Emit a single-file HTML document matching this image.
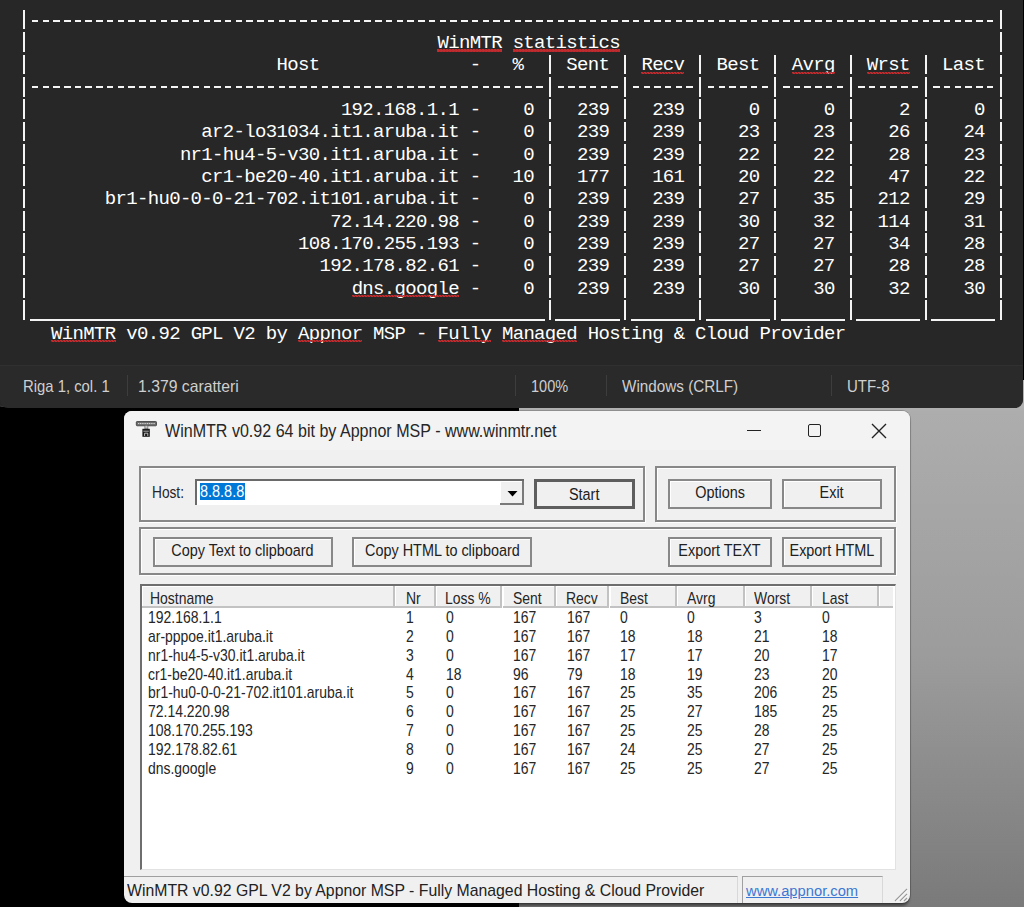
<!DOCTYPE html>
<html><head><meta charset="utf-8">
<style>
html,body{margin:0;padding:0;}
body{width:1024px;height:907px;position:relative;overflow:hidden;background:#000;font-family:"Liberation Sans",sans-serif;}
#bg{position:absolute;left:519px;top:380px;right:0;bottom:0;background:linear-gradient(180deg,#b2b2b2 5%,#adadad 6%,#9c9c9c 52%,#7f7f7f 93%,#7a7a7a 100%);}
#np{position:absolute;left:-5px;top:-10px;width:1028px;height:416px;background:#272727;border-bottom:1px solid #353535;border-radius:0 0 8px 8px;}
#sb{position:absolute;left:0;top:365px;width:1023px;height:41.5px;background:#2a2a2a;border-top:1px solid #303030;border-radius:0 0 8px 8px;}
pre{position:absolute;left:18.9px;top:9.7px;margin:0;font-family:"Liberation Mono",monospace;font-size:19px;letter-spacing:-0.669px;line-height:22.35px;color:#fff;}
.sq{position:relative;}
.sq::after{content:"";position:absolute;left:0;right:0;top:17.2px;height:2.4px;background:linear-gradient(45deg,transparent 30%,#c42b2e 30%,#c42b2e 70%,transparent 70%) 0 0/3px 2.4px,linear-gradient(-45deg,transparent 30%,#c42b2e 30%,#c42b2e 70%,transparent 70%) 1.5px 0/3px 2.4px;}
.grid i{position:absolute;background:#f4f4f4;display:block;}
.st{position:absolute;top:377px;font-size:16.5px;color:#cfcfcf;white-space:nowrap;transform:scaleX(0.9);transform-origin:0 0;}
.sep{position:absolute;top:375px;width:1px;height:21px;background:#3d3d3d;}
/* dialog */
#dlg{position:absolute;left:124px;top:411px;width:786px;height:492px;background:#f0f0f0;border-radius:8px;overflow:hidden;box-shadow:0 0 0 1px rgba(0,0,0,0.18),0 4px 3px -1px rgba(0,0,0,0.45);}
#title{position:absolute;left:0;top:0;width:786px;height:39px;background:#f3f3f3;}
.a{position:absolute;}
.ttl{position:absolute;left:164.5px;top:419.5px;font-size:18.5px;color:#262626;white-space:nowrap;transform:scaleX(0.868);transform-origin:0 0;}
.gb{position:absolute;border:2px solid #888;box-shadow:inset 1px 1px 0 #fff,1px 1px 0 #fff;box-sizing:border-box;}
.btn{position:absolute;border:2px solid #888;box-shadow:inset 1px 1px 0 #fff;background:#f0f0f0;font-size:16.3px;color:#202020;text-align:center;box-sizing:border-box;white-space:nowrap;}
.btn span{display:inline-block;transform:scaleX(0.885);}
.lt{position:absolute;font-size:17px;color:#262626;white-space:nowrap;transform:scaleX(0.82);transform-origin:0 0;}
.hc{position:absolute;top:585.5px;height:22px;background:#f0f0f0;border-right:2px solid #c2c2c2;border-bottom:2px solid #c2c2c2;box-shadow:inset 1px 1px 0 #fff;box-sizing:border-box;}
</style></head><body>
<div id="bg"></div>
<div id="np"></div>
<div id="sb"></div>
<pre> 
                                       <span class="sq">WinMTR</span> <span class="sq">statistics</span>
                        Host              -   %    Sent   <span class="sq">Recv</span>   Best   <span class="sq">Avrg</span>   <span class="sq">Wrst</span>   Last
 
                              192.168.1.1 -    0    239    239      0      0      2      0
                 ar2-lo31034.it1.aruba.it -    0    239    239     23     23     26     24
               nr1-hu4-5-v30.it1.aruba.it -    0    239    239     22     22     28     23
                 cr1-be20-40.it1.aruba.it -   10    177    161     20     22     47     22
        br1-hu0-0-0-21-702.it101.aruba.it -    0    239    239     27     35    212     29
                             72.14.220.98 -    0    239    239     30     32    114     31
                          108.170.255.193 -    0    239    239     27     27     34     28
                            192.178.82.61 -    0    239    239     27     27     28     28
                               <span class="sq">dns.google</span> -    0    239    239     30     30     32     30
 
   <span class="sq">WinMTR</span> v0.92 GPL V2 by <span class="sq">Appnor</span> MSP - <span class="sq">Fully</span> <span class="sq">Managed</span> Hosting &amp; Cloud Provider</pre>
<div class="grid">
<i style="left:23.27px;top:9.80px;width:2px;height:19.7px"></i>
<i style="left:999.79px;top:9.80px;width:2px;height:19.7px"></i>
<i style="left:23.27px;top:32.15px;width:2px;height:19.7px"></i>
<i style="left:999.79px;top:32.15px;width:2px;height:19.7px"></i>
<i style="left:23.27px;top:54.50px;width:2px;height:19.7px"></i>
<i style="left:549.08px;top:54.50px;width:2px;height:19.7px"></i>
<i style="left:624.20px;top:54.50px;width:2px;height:19.7px"></i>
<i style="left:699.32px;top:54.50px;width:2px;height:19.7px"></i>
<i style="left:774.44px;top:54.50px;width:2px;height:19.7px"></i>
<i style="left:849.55px;top:54.50px;width:2px;height:19.7px"></i>
<i style="left:924.67px;top:54.50px;width:2px;height:19.7px"></i>
<i style="left:999.79px;top:54.50px;width:2px;height:19.7px"></i>
<i style="left:23.27px;top:76.85px;width:2px;height:19.7px"></i>
<i style="left:549.08px;top:76.85px;width:2px;height:19.7px"></i>
<i style="left:624.20px;top:76.85px;width:2px;height:19.7px"></i>
<i style="left:699.32px;top:76.85px;width:2px;height:19.7px"></i>
<i style="left:774.44px;top:76.85px;width:2px;height:19.7px"></i>
<i style="left:849.55px;top:76.85px;width:2px;height:19.7px"></i>
<i style="left:924.67px;top:76.85px;width:2px;height:19.7px"></i>
<i style="left:999.79px;top:76.85px;width:2px;height:19.7px"></i>
<i style="left:23.27px;top:300.35px;width:2px;height:19.7px"></i>
<i style="left:549.08px;top:300.35px;width:2px;height:19.7px"></i>
<i style="left:624.20px;top:300.35px;width:2px;height:19.7px"></i>
<i style="left:699.32px;top:300.35px;width:2px;height:19.7px"></i>
<i style="left:774.44px;top:300.35px;width:2px;height:19.7px"></i>
<i style="left:849.55px;top:300.35px;width:2px;height:19.7px"></i>
<i style="left:924.67px;top:300.35px;width:2px;height:19.7px"></i>
<i style="left:999.79px;top:300.35px;width:2px;height:19.7px"></i>
<i style="left:23.27px;top:99.20px;width:2px;height:19.7px"></i>
<i style="left:549.08px;top:99.20px;width:2px;height:19.7px"></i>
<i style="left:624.20px;top:99.20px;width:2px;height:19.7px"></i>
<i style="left:699.32px;top:99.20px;width:2px;height:19.7px"></i>
<i style="left:774.44px;top:99.20px;width:2px;height:19.7px"></i>
<i style="left:849.55px;top:99.20px;width:2px;height:19.7px"></i>
<i style="left:924.67px;top:99.20px;width:2px;height:19.7px"></i>
<i style="left:999.79px;top:99.20px;width:2px;height:19.7px"></i>
<i style="left:23.27px;top:121.55px;width:2px;height:19.7px"></i>
<i style="left:549.08px;top:121.55px;width:2px;height:19.7px"></i>
<i style="left:624.20px;top:121.55px;width:2px;height:19.7px"></i>
<i style="left:699.32px;top:121.55px;width:2px;height:19.7px"></i>
<i style="left:774.44px;top:121.55px;width:2px;height:19.7px"></i>
<i style="left:849.55px;top:121.55px;width:2px;height:19.7px"></i>
<i style="left:924.67px;top:121.55px;width:2px;height:19.7px"></i>
<i style="left:999.79px;top:121.55px;width:2px;height:19.7px"></i>
<i style="left:23.27px;top:143.90px;width:2px;height:19.7px"></i>
<i style="left:549.08px;top:143.90px;width:2px;height:19.7px"></i>
<i style="left:624.20px;top:143.90px;width:2px;height:19.7px"></i>
<i style="left:699.32px;top:143.90px;width:2px;height:19.7px"></i>
<i style="left:774.44px;top:143.90px;width:2px;height:19.7px"></i>
<i style="left:849.55px;top:143.90px;width:2px;height:19.7px"></i>
<i style="left:924.67px;top:143.90px;width:2px;height:19.7px"></i>
<i style="left:999.79px;top:143.90px;width:2px;height:19.7px"></i>
<i style="left:23.27px;top:166.25px;width:2px;height:19.7px"></i>
<i style="left:549.08px;top:166.25px;width:2px;height:19.7px"></i>
<i style="left:624.20px;top:166.25px;width:2px;height:19.7px"></i>
<i style="left:699.32px;top:166.25px;width:2px;height:19.7px"></i>
<i style="left:774.44px;top:166.25px;width:2px;height:19.7px"></i>
<i style="left:849.55px;top:166.25px;width:2px;height:19.7px"></i>
<i style="left:924.67px;top:166.25px;width:2px;height:19.7px"></i>
<i style="left:999.79px;top:166.25px;width:2px;height:19.7px"></i>
<i style="left:23.27px;top:188.60px;width:2px;height:19.7px"></i>
<i style="left:549.08px;top:188.60px;width:2px;height:19.7px"></i>
<i style="left:624.20px;top:188.60px;width:2px;height:19.7px"></i>
<i style="left:699.32px;top:188.60px;width:2px;height:19.7px"></i>
<i style="left:774.44px;top:188.60px;width:2px;height:19.7px"></i>
<i style="left:849.55px;top:188.60px;width:2px;height:19.7px"></i>
<i style="left:924.67px;top:188.60px;width:2px;height:19.7px"></i>
<i style="left:999.79px;top:188.60px;width:2px;height:19.7px"></i>
<i style="left:23.27px;top:210.95px;width:2px;height:19.7px"></i>
<i style="left:549.08px;top:210.95px;width:2px;height:19.7px"></i>
<i style="left:624.20px;top:210.95px;width:2px;height:19.7px"></i>
<i style="left:699.32px;top:210.95px;width:2px;height:19.7px"></i>
<i style="left:774.44px;top:210.95px;width:2px;height:19.7px"></i>
<i style="left:849.55px;top:210.95px;width:2px;height:19.7px"></i>
<i style="left:924.67px;top:210.95px;width:2px;height:19.7px"></i>
<i style="left:999.79px;top:210.95px;width:2px;height:19.7px"></i>
<i style="left:23.27px;top:233.30px;width:2px;height:19.7px"></i>
<i style="left:549.08px;top:233.30px;width:2px;height:19.7px"></i>
<i style="left:624.20px;top:233.30px;width:2px;height:19.7px"></i>
<i style="left:699.32px;top:233.30px;width:2px;height:19.7px"></i>
<i style="left:774.44px;top:233.30px;width:2px;height:19.7px"></i>
<i style="left:849.55px;top:233.30px;width:2px;height:19.7px"></i>
<i style="left:924.67px;top:233.30px;width:2px;height:19.7px"></i>
<i style="left:999.79px;top:233.30px;width:2px;height:19.7px"></i>
<i style="left:23.27px;top:255.65px;width:2px;height:19.7px"></i>
<i style="left:549.08px;top:255.65px;width:2px;height:19.7px"></i>
<i style="left:624.20px;top:255.65px;width:2px;height:19.7px"></i>
<i style="left:699.32px;top:255.65px;width:2px;height:19.7px"></i>
<i style="left:774.44px;top:255.65px;width:2px;height:19.7px"></i>
<i style="left:849.55px;top:255.65px;width:2px;height:19.7px"></i>
<i style="left:924.67px;top:255.65px;width:2px;height:19.7px"></i>
<i style="left:999.79px;top:255.65px;width:2px;height:19.7px"></i>
<i style="left:23.27px;top:278.00px;width:2px;height:19.7px"></i>
<i style="left:549.08px;top:278.00px;width:2px;height:19.7px"></i>
<i style="left:624.20px;top:278.00px;width:2px;height:19.7px"></i>
<i style="left:699.32px;top:278.00px;width:2px;height:19.7px"></i>
<i style="left:774.44px;top:278.00px;width:2px;height:19.7px"></i>
<i style="left:849.55px;top:278.00px;width:2px;height:19.7px"></i>
<i style="left:924.67px;top:278.00px;width:2px;height:19.7px"></i>
<i style="left:999.79px;top:278.00px;width:2px;height:19.7px"></i>
<i style="left:31.83px;top:19.50px;width:6.5px;height:2px"></i>
<i style="left:42.56px;top:19.50px;width:6.5px;height:2px"></i>
<i style="left:53.29px;top:19.50px;width:6.5px;height:2px"></i>
<i style="left:64.02px;top:19.50px;width:6.5px;height:2px"></i>
<i style="left:74.76px;top:19.50px;width:6.5px;height:2px"></i>
<i style="left:85.49px;top:19.50px;width:6.5px;height:2px"></i>
<i style="left:96.22px;top:19.50px;width:6.5px;height:2px"></i>
<i style="left:106.95px;top:19.50px;width:6.5px;height:2px"></i>
<i style="left:117.68px;top:19.50px;width:6.5px;height:2px"></i>
<i style="left:128.41px;top:19.50px;width:6.5px;height:2px"></i>
<i style="left:139.14px;top:19.50px;width:6.5px;height:2px"></i>
<i style="left:149.87px;top:19.50px;width:6.5px;height:2px"></i>
<i style="left:160.60px;top:19.50px;width:6.5px;height:2px"></i>
<i style="left:171.33px;top:19.50px;width:6.5px;height:2px"></i>
<i style="left:182.06px;top:19.50px;width:6.5px;height:2px"></i>
<i style="left:192.80px;top:19.50px;width:6.5px;height:2px"></i>
<i style="left:203.53px;top:19.50px;width:6.5px;height:2px"></i>
<i style="left:214.26px;top:19.50px;width:6.5px;height:2px"></i>
<i style="left:224.99px;top:19.50px;width:6.5px;height:2px"></i>
<i style="left:235.72px;top:19.50px;width:6.5px;height:2px"></i>
<i style="left:246.45px;top:19.50px;width:6.5px;height:2px"></i>
<i style="left:257.18px;top:19.50px;width:6.5px;height:2px"></i>
<i style="left:267.91px;top:19.50px;width:6.5px;height:2px"></i>
<i style="left:278.64px;top:19.50px;width:6.5px;height:2px"></i>
<i style="left:289.37px;top:19.50px;width:6.5px;height:2px"></i>
<i style="left:300.11px;top:19.50px;width:6.5px;height:2px"></i>
<i style="left:310.84px;top:19.50px;width:6.5px;height:2px"></i>
<i style="left:321.57px;top:19.50px;width:6.5px;height:2px"></i>
<i style="left:332.30px;top:19.50px;width:6.5px;height:2px"></i>
<i style="left:343.03px;top:19.50px;width:6.5px;height:2px"></i>
<i style="left:353.76px;top:19.50px;width:6.5px;height:2px"></i>
<i style="left:364.49px;top:19.50px;width:6.5px;height:2px"></i>
<i style="left:375.22px;top:19.50px;width:6.5px;height:2px"></i>
<i style="left:385.95px;top:19.50px;width:6.5px;height:2px"></i>
<i style="left:396.68px;top:19.50px;width:6.5px;height:2px"></i>
<i style="left:407.42px;top:19.50px;width:6.5px;height:2px"></i>
<i style="left:418.15px;top:19.50px;width:6.5px;height:2px"></i>
<i style="left:428.88px;top:19.50px;width:6.5px;height:2px"></i>
<i style="left:439.61px;top:19.50px;width:6.5px;height:2px"></i>
<i style="left:450.34px;top:19.50px;width:6.5px;height:2px"></i>
<i style="left:461.07px;top:19.50px;width:6.5px;height:2px"></i>
<i style="left:471.80px;top:19.50px;width:6.5px;height:2px"></i>
<i style="left:482.53px;top:19.50px;width:6.5px;height:2px"></i>
<i style="left:493.26px;top:19.50px;width:6.5px;height:2px"></i>
<i style="left:503.99px;top:19.50px;width:6.5px;height:2px"></i>
<i style="left:514.73px;top:19.50px;width:6.5px;height:2px"></i>
<i style="left:525.46px;top:19.50px;width:6.5px;height:2px"></i>
<i style="left:536.19px;top:19.50px;width:6.5px;height:2px"></i>
<i style="left:546.92px;top:19.50px;width:6.5px;height:2px"></i>
<i style="left:557.65px;top:19.50px;width:6.5px;height:2px"></i>
<i style="left:568.38px;top:19.50px;width:6.5px;height:2px"></i>
<i style="left:579.11px;top:19.50px;width:6.5px;height:2px"></i>
<i style="left:589.84px;top:19.50px;width:6.5px;height:2px"></i>
<i style="left:600.57px;top:19.50px;width:6.5px;height:2px"></i>
<i style="left:611.31px;top:19.50px;width:6.5px;height:2px"></i>
<i style="left:622.04px;top:19.50px;width:6.5px;height:2px"></i>
<i style="left:632.77px;top:19.50px;width:6.5px;height:2px"></i>
<i style="left:643.50px;top:19.50px;width:6.5px;height:2px"></i>
<i style="left:654.23px;top:19.50px;width:6.5px;height:2px"></i>
<i style="left:664.96px;top:19.50px;width:6.5px;height:2px"></i>
<i style="left:675.69px;top:19.50px;width:6.5px;height:2px"></i>
<i style="left:686.42px;top:19.50px;width:6.5px;height:2px"></i>
<i style="left:697.15px;top:19.50px;width:6.5px;height:2px"></i>
<i style="left:707.88px;top:19.50px;width:6.5px;height:2px"></i>
<i style="left:718.62px;top:19.50px;width:6.5px;height:2px"></i>
<i style="left:729.35px;top:19.50px;width:6.5px;height:2px"></i>
<i style="left:740.08px;top:19.50px;width:6.5px;height:2px"></i>
<i style="left:750.81px;top:19.50px;width:6.5px;height:2px"></i>
<i style="left:761.54px;top:19.50px;width:6.5px;height:2px"></i>
<i style="left:772.27px;top:19.50px;width:6.5px;height:2px"></i>
<i style="left:783.00px;top:19.50px;width:6.5px;height:2px"></i>
<i style="left:793.73px;top:19.50px;width:6.5px;height:2px"></i>
<i style="left:804.46px;top:19.50px;width:6.5px;height:2px"></i>
<i style="left:815.19px;top:19.50px;width:6.5px;height:2px"></i>
<i style="left:825.93px;top:19.50px;width:6.5px;height:2px"></i>
<i style="left:836.66px;top:19.50px;width:6.5px;height:2px"></i>
<i style="left:847.39px;top:19.50px;width:6.5px;height:2px"></i>
<i style="left:858.12px;top:19.50px;width:6.5px;height:2px"></i>
<i style="left:868.85px;top:19.50px;width:6.5px;height:2px"></i>
<i style="left:879.58px;top:19.50px;width:6.5px;height:2px"></i>
<i style="left:890.31px;top:19.50px;width:6.5px;height:2px"></i>
<i style="left:901.04px;top:19.50px;width:6.5px;height:2px"></i>
<i style="left:911.77px;top:19.50px;width:6.5px;height:2px"></i>
<i style="left:922.50px;top:19.50px;width:6.5px;height:2px"></i>
<i style="left:933.24px;top:19.50px;width:6.5px;height:2px"></i>
<i style="left:943.97px;top:19.50px;width:6.5px;height:2px"></i>
<i style="left:954.70px;top:19.50px;width:6.5px;height:2px"></i>
<i style="left:965.43px;top:19.50px;width:6.5px;height:2px"></i>
<i style="left:976.16px;top:19.50px;width:6.5px;height:2px"></i>
<i style="left:986.89px;top:19.50px;width:6.5px;height:2px"></i>
<i style="left:31.83px;top:86.49px;width:6.5px;height:2px"></i>
<i style="left:42.56px;top:86.49px;width:6.5px;height:2px"></i>
<i style="left:53.29px;top:86.49px;width:6.5px;height:2px"></i>
<i style="left:64.02px;top:86.49px;width:6.5px;height:2px"></i>
<i style="left:74.76px;top:86.49px;width:6.5px;height:2px"></i>
<i style="left:85.49px;top:86.49px;width:6.5px;height:2px"></i>
<i style="left:96.22px;top:86.49px;width:6.5px;height:2px"></i>
<i style="left:106.95px;top:86.49px;width:6.5px;height:2px"></i>
<i style="left:117.68px;top:86.49px;width:6.5px;height:2px"></i>
<i style="left:128.41px;top:86.49px;width:6.5px;height:2px"></i>
<i style="left:139.14px;top:86.49px;width:6.5px;height:2px"></i>
<i style="left:149.87px;top:86.49px;width:6.5px;height:2px"></i>
<i style="left:160.60px;top:86.49px;width:6.5px;height:2px"></i>
<i style="left:171.33px;top:86.49px;width:6.5px;height:2px"></i>
<i style="left:182.06px;top:86.49px;width:6.5px;height:2px"></i>
<i style="left:192.80px;top:86.49px;width:6.5px;height:2px"></i>
<i style="left:203.53px;top:86.49px;width:6.5px;height:2px"></i>
<i style="left:214.26px;top:86.49px;width:6.5px;height:2px"></i>
<i style="left:224.99px;top:86.49px;width:6.5px;height:2px"></i>
<i style="left:235.72px;top:86.49px;width:6.5px;height:2px"></i>
<i style="left:246.45px;top:86.49px;width:6.5px;height:2px"></i>
<i style="left:257.18px;top:86.49px;width:6.5px;height:2px"></i>
<i style="left:267.91px;top:86.49px;width:6.5px;height:2px"></i>
<i style="left:278.64px;top:86.49px;width:6.5px;height:2px"></i>
<i style="left:289.37px;top:86.49px;width:6.5px;height:2px"></i>
<i style="left:300.11px;top:86.49px;width:6.5px;height:2px"></i>
<i style="left:310.84px;top:86.49px;width:6.5px;height:2px"></i>
<i style="left:321.57px;top:86.49px;width:6.5px;height:2px"></i>
<i style="left:332.30px;top:86.49px;width:6.5px;height:2px"></i>
<i style="left:343.03px;top:86.49px;width:6.5px;height:2px"></i>
<i style="left:353.76px;top:86.49px;width:6.5px;height:2px"></i>
<i style="left:364.49px;top:86.49px;width:6.5px;height:2px"></i>
<i style="left:375.22px;top:86.49px;width:6.5px;height:2px"></i>
<i style="left:385.95px;top:86.49px;width:6.5px;height:2px"></i>
<i style="left:396.68px;top:86.49px;width:6.5px;height:2px"></i>
<i style="left:407.42px;top:86.49px;width:6.5px;height:2px"></i>
<i style="left:418.15px;top:86.49px;width:6.5px;height:2px"></i>
<i style="left:428.88px;top:86.49px;width:6.5px;height:2px"></i>
<i style="left:439.61px;top:86.49px;width:6.5px;height:2px"></i>
<i style="left:450.34px;top:86.49px;width:6.5px;height:2px"></i>
<i style="left:461.07px;top:86.49px;width:6.5px;height:2px"></i>
<i style="left:471.80px;top:86.49px;width:6.5px;height:2px"></i>
<i style="left:482.53px;top:86.49px;width:6.5px;height:2px"></i>
<i style="left:493.26px;top:86.49px;width:6.5px;height:2px"></i>
<i style="left:503.99px;top:86.49px;width:6.5px;height:2px"></i>
<i style="left:514.73px;top:86.49px;width:6.5px;height:2px"></i>
<i style="left:525.46px;top:86.49px;width:6.5px;height:2px"></i>
<i style="left:536.19px;top:86.49px;width:6.5px;height:2px"></i>
<i style="left:557.65px;top:86.49px;width:6.5px;height:2px"></i>
<i style="left:568.38px;top:86.49px;width:6.5px;height:2px"></i>
<i style="left:579.11px;top:86.49px;width:6.5px;height:2px"></i>
<i style="left:589.84px;top:86.49px;width:6.5px;height:2px"></i>
<i style="left:600.57px;top:86.49px;width:6.5px;height:2px"></i>
<i style="left:611.31px;top:86.49px;width:6.5px;height:2px"></i>
<i style="left:632.77px;top:86.49px;width:6.5px;height:2px"></i>
<i style="left:643.50px;top:86.49px;width:6.5px;height:2px"></i>
<i style="left:654.23px;top:86.49px;width:6.5px;height:2px"></i>
<i style="left:664.96px;top:86.49px;width:6.5px;height:2px"></i>
<i style="left:675.69px;top:86.49px;width:6.5px;height:2px"></i>
<i style="left:686.42px;top:86.49px;width:6.5px;height:2px"></i>
<i style="left:707.88px;top:86.49px;width:6.5px;height:2px"></i>
<i style="left:718.62px;top:86.49px;width:6.5px;height:2px"></i>
<i style="left:729.35px;top:86.49px;width:6.5px;height:2px"></i>
<i style="left:740.08px;top:86.49px;width:6.5px;height:2px"></i>
<i style="left:750.81px;top:86.49px;width:6.5px;height:2px"></i>
<i style="left:761.54px;top:86.49px;width:6.5px;height:2px"></i>
<i style="left:783.00px;top:86.49px;width:6.5px;height:2px"></i>
<i style="left:793.73px;top:86.49px;width:6.5px;height:2px"></i>
<i style="left:804.46px;top:86.49px;width:6.5px;height:2px"></i>
<i style="left:815.19px;top:86.49px;width:6.5px;height:2px"></i>
<i style="left:825.93px;top:86.49px;width:6.5px;height:2px"></i>
<i style="left:836.66px;top:86.49px;width:6.5px;height:2px"></i>
<i style="left:858.12px;top:86.49px;width:6.5px;height:2px"></i>
<i style="left:868.85px;top:86.49px;width:6.5px;height:2px"></i>
<i style="left:879.58px;top:86.49px;width:6.5px;height:2px"></i>
<i style="left:890.31px;top:86.49px;width:6.5px;height:2px"></i>
<i style="left:901.04px;top:86.49px;width:6.5px;height:2px"></i>
<i style="left:911.77px;top:86.49px;width:6.5px;height:2px"></i>
<i style="left:933.24px;top:86.49px;width:6.5px;height:2px"></i>
<i style="left:943.97px;top:86.49px;width:6.5px;height:2px"></i>
<i style="left:954.70px;top:86.49px;width:6.5px;height:2px"></i>
<i style="left:965.43px;top:86.49px;width:6.5px;height:2px"></i>
<i style="left:976.16px;top:86.49px;width:6.5px;height:2px"></i>
<i style="left:986.89px;top:86.49px;width:6.5px;height:2px"></i>
<i style="left:29.63px;top:318.8px;width:515.09px;height:2.2px"></i>
<i style="left:555.45px;top:318.8px;width:64.39px;height:2.2px"></i>
<i style="left:630.57px;top:318.8px;width:64.39px;height:2.2px"></i>
<i style="left:705.68px;top:318.8px;width:64.39px;height:2.2px"></i>
<i style="left:780.80px;top:318.8px;width:64.39px;height:2.2px"></i>
<i style="left:855.92px;top:318.8px;width:64.39px;height:2.2px"></i>
<i style="left:931.03px;top:318.8px;width:64.39px;height:2.2px"></i>
</div>
<div class="st" style="left:23px">Riga 1, col. 1</div>
<div class="sep" style="left:127px"></div>
<div class="st" style="left:138px;transform:scaleX(0.955)">1.379 caratteri</div>
<div class="sep" style="left:515px"></div>
<div class="st" style="left:531px;transform:scaleX(0.88)">100%</div>
<div class="sep" style="left:606px"></div>
<div class="st" style="left:622px;transform:scaleX(0.925)">Windows (CRLF)</div>
<div class="sep" style="left:831px"></div>
<div class="st" style="left:847px;transform:scaleX(0.91)">UTF-8</div>

<div id="dlg"><div id="title"></div></div>
<svg class="a" style="left:135px;top:420px" width="23" height="18" viewBox="0 0 23 18">
 <rect x="1.3" y="1.5" width="20.2" height="4.3" rx="0.8" fill="#6a6a6a" stroke="#3a3a3a" stroke-width="0.8"/>
 <path d="M3 3.6H20" stroke="#e8e8e8" stroke-width="0.9" stroke-dasharray="1.2 0.6"/>
 <rect x="9.9" y="5.3" width="3" height="3.6" fill="#c4c4c4" stroke="#555" stroke-width="0.6"/>
 <rect x="7.4" y="8.8" width="7.4" height="8" fill="#1a1a1a"/>
 <path d="M8.4 11.2H13.8" stroke="#d0d0d0" stroke-width="0.8"/>
 <path d="M9.6 16V13.2H12.8V16" fill="none" stroke="#e0e0e0" stroke-width="0.8"/>
</svg>
<div class="ttl">WinMTR v0.92 64 bit by Appnor MSP - www.winmtr.net</div>
<div class="a" style="left:747px;top:430px;width:13.5px;height:1.3px;background:#222"></div>
<div class="a" style="left:808px;top:424px;width:11px;height:11px;border:1.4px solid #222;border-radius:2px"></div>
<svg class="a" style="left:871px;top:423px" width="16" height="16" viewBox="0 0 16 16"><path d="M1 1L15 15M15 1L1 15" stroke="#222" stroke-width="1.4"/></svg>

<div class="gb" style="left:139px;top:466px;width:506px;height:56px"></div>
<div class="gb" style="left:655px;top:466px;width:241px;height:56px"></div>
<div class="gb" style="left:139px;top:527px;width:757px;height:48px"></div>

<div class="lt" style="left:151.5px;top:482.5px;font-size:16.5px;transform:scaleX(0.83)">Host:</div>
<div class="a" style="left:195px;top:479px;width:329px;height:26px;background:#fff;border-top:2px solid #6a6a6a;border-left:2px solid #6a6a6a;box-sizing:border-box"></div>
<div class="a" style="left:199.5px;top:482.5px;width:45.5px;height:17.5px;background:#0078d7"></div>
<div class="lt" style="left:199.5px;top:481.5px;font-size:17px;color:#fff;transform:scaleX(0.85)">8.8.8.8</div>
<div class="a" style="left:500px;top:481px;width:24px;height:24px;background:#f0f0f0;border-right:2px solid #7a7a7a;border-bottom:2px solid #7a7a7a;box-shadow:inset 1px 1px 0 #fff;box-sizing:border-box"></div>
<svg class="a" style="left:506.5px;top:490.5px" width="11" height="6" viewBox="0 0 11 6"><path d="M0.5 0H10.5L5.5 5.5z" fill="#000"/></svg>
<div class="btn" style="left:534px;top:479px;width:100.5px;height:30px;border:3px solid #5e5e5e;box-shadow:none;line-height:24px"><span>Start</span></div>
<div class="btn" style="left:668px;top:479px;width:103.5px;height:30px;line-height:22.6px"><span>Options</span></div>
<div class="btn" style="left:782px;top:479px;width:99.5px;height:30px;line-height:22.6px"><span>Exit</span></div>
<div class="btn" style="left:152.5px;top:536.5px;width:180px;height:30.5px;line-height:23px"><span>Copy Text to clipboard</span></div>
<div class="btn" style="left:352px;top:536.5px;width:180px;height:30.5px;line-height:23px"><span>Copy HTML to clipboard</span></div>
<div class="btn" style="left:668px;top:536.5px;width:103.5px;height:30.5px;line-height:23px"><span>Export TEXT</span></div>
<div class="btn" style="left:782px;top:536.5px;width:99.5px;height:30.5px;line-height:23px"><span>Export HTML</span></div>

<div class="a" style="left:139.5px;top:583.5px;width:756px;height:286px;background:#fff;border-top:2px solid #6e6e6e;border-left:2px solid #6e6e6e;border-right:1px solid #e2e2e2;border-bottom:1px solid #e2e2e2;box-sizing:border-box"></div>
<div class="hc" style="left:141.5px;width:253.1px"></div>
<div class="hc" style="left:394.6px;width:41.1px"></div>
<div class="hc" style="left:435.7px;width:66.8px"></div>
<div class="hc" style="left:502.5px;width:53.4px"></div>
<div class="hc" style="left:555.9px;width:53.6px"></div>
<div class="hc" style="left:609.5px;width:67.3px"></div>
<div class="hc" style="left:676.8px;width:67.8px"></div>
<div class="hc" style="left:744.6px;width:67.2px"></div>
<div class="hc" style="left:811.8px;width:67.1px"></div>
<div class="hc" style="left:878.9px;width:14.6px;border-right:0"></div>
<div class="lt" style="left:150px;top:588.5px">Hostname</div>
<div class="lt" style="left:406.4px;top:588.5px">Nr</div>
<div class="lt" style="left:445.4px;top:588.5px">Loss %</div>
<div class="lt" style="left:512.8px;top:588.5px">Sent</div>
<div class="lt" style="left:566.4px;top:588.5px">Recv</div>
<div class="lt" style="left:620.3px;top:588.5px">Best</div>
<div class="lt" style="left:686.7px;top:588.5px">Avrg</div>
<div class="lt" style="left:754px;top:588.5px">Worst</div>
<div class="lt" style="left:821.8px;top:588.5px">Last</div>
<div class="lt" style="left:148px;top:608.00px">192.168.1.1</div>
<div class="lt" style="left:406px;top:608.00px">1</div>
<div class="lt" style="left:445.5px;top:608.00px">0</div>
<div class="lt" style="left:513px;top:608.00px">167</div>
<div class="lt" style="left:566.5px;top:608.00px">167</div>
<div class="lt" style="left:620px;top:608.00px">0</div>
<div class="lt" style="left:687px;top:608.00px">0</div>
<div class="lt" style="left:754px;top:608.00px">3</div>
<div class="lt" style="left:822px;top:608.00px">0</div>
<div class="lt" style="left:148px;top:626.85px">ar-pppoe.it1.aruba.it</div>
<div class="lt" style="left:406px;top:626.85px">2</div>
<div class="lt" style="left:445.5px;top:626.85px">0</div>
<div class="lt" style="left:513px;top:626.85px">167</div>
<div class="lt" style="left:566.5px;top:626.85px">167</div>
<div class="lt" style="left:620px;top:626.85px">18</div>
<div class="lt" style="left:687px;top:626.85px">18</div>
<div class="lt" style="left:754px;top:626.85px">21</div>
<div class="lt" style="left:822px;top:626.85px">18</div>
<div class="lt" style="left:148px;top:645.70px">nr1-hu4-5-v30.it1.aruba.it</div>
<div class="lt" style="left:406px;top:645.70px">3</div>
<div class="lt" style="left:445.5px;top:645.70px">0</div>
<div class="lt" style="left:513px;top:645.70px">167</div>
<div class="lt" style="left:566.5px;top:645.70px">167</div>
<div class="lt" style="left:620px;top:645.70px">17</div>
<div class="lt" style="left:687px;top:645.70px">17</div>
<div class="lt" style="left:754px;top:645.70px">20</div>
<div class="lt" style="left:822px;top:645.70px">17</div>
<div class="lt" style="left:148px;top:664.55px">cr1-be20-40.it1.aruba.it</div>
<div class="lt" style="left:406px;top:664.55px">4</div>
<div class="lt" style="left:445.5px;top:664.55px">18</div>
<div class="lt" style="left:513px;top:664.55px">96</div>
<div class="lt" style="left:566.5px;top:664.55px">79</div>
<div class="lt" style="left:620px;top:664.55px">18</div>
<div class="lt" style="left:687px;top:664.55px">19</div>
<div class="lt" style="left:754px;top:664.55px">23</div>
<div class="lt" style="left:822px;top:664.55px">20</div>
<div class="lt" style="left:148px;top:683.40px">br1-hu0-0-0-21-702.it101.aruba.it</div>
<div class="lt" style="left:406px;top:683.40px">5</div>
<div class="lt" style="left:445.5px;top:683.40px">0</div>
<div class="lt" style="left:513px;top:683.40px">167</div>
<div class="lt" style="left:566.5px;top:683.40px">167</div>
<div class="lt" style="left:620px;top:683.40px">25</div>
<div class="lt" style="left:687px;top:683.40px">35</div>
<div class="lt" style="left:754px;top:683.40px">206</div>
<div class="lt" style="left:822px;top:683.40px">25</div>
<div class="lt" style="left:148px;top:702.25px">72.14.220.98</div>
<div class="lt" style="left:406px;top:702.25px">6</div>
<div class="lt" style="left:445.5px;top:702.25px">0</div>
<div class="lt" style="left:513px;top:702.25px">167</div>
<div class="lt" style="left:566.5px;top:702.25px">167</div>
<div class="lt" style="left:620px;top:702.25px">25</div>
<div class="lt" style="left:687px;top:702.25px">27</div>
<div class="lt" style="left:754px;top:702.25px">185</div>
<div class="lt" style="left:822px;top:702.25px">25</div>
<div class="lt" style="left:148px;top:721.10px">108.170.255.193</div>
<div class="lt" style="left:406px;top:721.10px">7</div>
<div class="lt" style="left:445.5px;top:721.10px">0</div>
<div class="lt" style="left:513px;top:721.10px">167</div>
<div class="lt" style="left:566.5px;top:721.10px">167</div>
<div class="lt" style="left:620px;top:721.10px">25</div>
<div class="lt" style="left:687px;top:721.10px">25</div>
<div class="lt" style="left:754px;top:721.10px">28</div>
<div class="lt" style="left:822px;top:721.10px">25</div>
<div class="lt" style="left:148px;top:739.95px">192.178.82.61</div>
<div class="lt" style="left:406px;top:739.95px">8</div>
<div class="lt" style="left:445.5px;top:739.95px">0</div>
<div class="lt" style="left:513px;top:739.95px">167</div>
<div class="lt" style="left:566.5px;top:739.95px">167</div>
<div class="lt" style="left:620px;top:739.95px">24</div>
<div class="lt" style="left:687px;top:739.95px">25</div>
<div class="lt" style="left:754px;top:739.95px">27</div>
<div class="lt" style="left:822px;top:739.95px">25</div>
<div class="lt" style="left:148px;top:758.80px">dns.google</div>
<div class="lt" style="left:406px;top:758.80px">9</div>
<div class="lt" style="left:445.5px;top:758.80px">0</div>
<div class="lt" style="left:513px;top:758.80px">167</div>
<div class="lt" style="left:566.5px;top:758.80px">167</div>
<div class="lt" style="left:620px;top:758.80px">25</div>
<div class="lt" style="left:687px;top:758.80px">25</div>
<div class="lt" style="left:754px;top:758.80px">27</div>
<div class="lt" style="left:822px;top:758.80px">25</div>

<div class="a" style="left:124px;top:876px;width:614px;height:27px;border-top:1px solid #a0a0a0;border-right:1px solid #d8d8d8;box-sizing:border-box"></div>
<div class="a" style="left:742px;top:876px;width:141px;height:27px;border-top:1px solid #a0a0a0;border-left:1px solid #a0a0a0;border-right:1px solid #d8d8d8;box-sizing:border-box"></div>
<div class="lt" style="left:127px;top:881px;font-size:17px;color:#222;transform:scaleX(0.93)">WinMTR v0.92 GPL V2 by Appnor MSP - Fully Managed Hosting &amp; Cloud Provider</div>
<div class="lt" style="left:746px;top:882px;font-size:15.5px;color:#3b78d4;text-decoration:underline;transform:scaleX(0.95)">www.appnor.com</div>
<svg class="a" style="left:892px;top:886px" width="16" height="16" viewBox="0 0 16 16"><path d="M15 3L3 15M15 8L8 15M15 12L12 15" stroke="#9a9a9a" stroke-width="1.2"/><path d="M15.5 4L4 15.5M15.5 9L9 15.5" stroke="#fff" stroke-width="0.8"/></svg>
</body></html>
